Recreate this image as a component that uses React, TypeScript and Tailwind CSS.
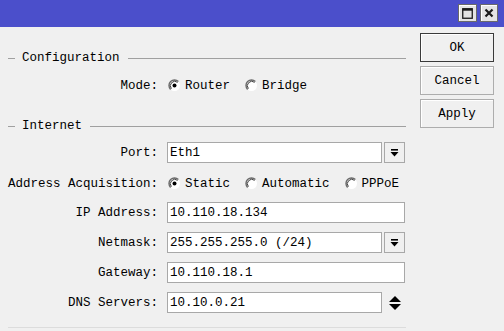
import React from "react";

const Radio = ({ checked }: { checked?: boolean }) => (
  <svg width="13" height="13" viewBox="0 0 13 13" className="shrink-0">
    <circle cx="6.5" cy="6.5" r="5.5" fill="#ffffff" />
    <path d="M2.61 10.39 A5.5 5.5 0 0 1 10.39 2.61" fill="none" stroke="#6a6a6a" strokeWidth="1.4" />
    <path d="M3.4 9.6 A4.4 4.4 0 0 1 9.6 3.4" fill="none" stroke="#2a2a2a" strokeWidth="0.9" />
    {checked && <circle cx="6.5" cy="6.5" r="2" fill="#000000" />}
  </svg>
);

const RadioOpt = ({ label, checked }: { label: string; checked?: boolean }) => (
  <div className="flex items-center gap-[4px]">
    <Radio checked={checked} />
    <span>{label}</span>
  </div>
);

const Label = ({ children }: { children: React.ReactNode }) => (
  <div className="w-[150px] shrink-0 text-right whitespace-pre mr-[9px]">{children}</div>
);

const Input = ({ value, wide }: { value: string; wide?: boolean }) => (
  <div
    className={`${wide ? "w-[238px]" : "w-[215px]"} h-[21px] bg-white border border-[#a8a8a8] flex items-center pl-[2px] whitespace-pre`}
  >
    {value}
  </div>
);

const DropBtn = () => (
  <div className="ml-[2px] w-[21px] h-[21px] border border-[#a8a8a8] bg-[#f0f0f0] flex items-center justify-center">
    <svg width="9" height="10" viewBox="0 0 9 10">
      <rect x="1" y="1" width="7" height="1.6" fill="#000" />
      <path d="M0.5 4 L8.5 4 L4.5 8.5 Z" fill="#000" />
    </svg>
  </div>
);

const Spinner = () => (
  <div className="ml-[6px] w-[14px] h-[21px] flex items-center justify-center">
    <svg width="14" height="16" viewBox="0 0 14 16">
      <path d="M1 7 L13 7 L7 1 Z" fill="#000" />
      <path d="M1 9 L13 9 L7 15 Z" fill="#000" />
    </svg>
  </div>
);

const GroupHeader = ({ title, className }: { title: string; className: string }) => (
  <div className={`flex items-center h-[20px] ${className}`}>
    <div className="w-[7px] h-px bg-[#a0a0a0]" />
    <span className="ml-[7px]">{title}</span>
    <div className="flex-1 ml-[8px] h-px bg-[#a0a0a0]" />
  </div>
);

const Row = ({ className, children }: { className: string; children: React.ReactNode }) => (
  <div className={`flex items-center h-[21px] ${className}`}>{children}</div>
);

const DlgBtn = ({ label, primary }: { label: string; primary?: boolean }) => (
  <div
    className={`h-[29px] w-[74px] flex items-center justify-center bg-[#f0f0f0] border ${
      primary ? "border-[#3a3a3a]" : "border-[#adadad]"
    } shadow-[inset_1px_1px_0_#ffffff]`}
  >
    {label}
  </div>
);

export default function App() {
  return (
    <div
      className="w-[504px] h-[331px] bg-[#f0f0f0] text-black overflow-hidden"
      style={{ fontFamily: '"Liberation Mono", monospace', fontSize: "12.5px", lineHeight: "14px" }}
    >
      <div className="h-[27px] bg-[#4b4fcb] flex justify-end items-start pt-[4px] pr-[6px] gap-[3px]">
        <div className="w-[19px] h-[18px] bg-[#e4e4e4] border border-[#6a6a6a] shadow-[inset_1px_1px_0_#ffffff] flex items-center justify-center">
          <svg width="11" height="11" viewBox="0 0 11 11">
            <rect x="0.75" y="0.75" width="9.5" height="9.5" fill="none" stroke="#1a1a1a" strokeWidth="1.3" />
            <rect x="0.5" y="0.5" width="10" height="2.2" fill="#1a1a1a" />
          </svg>
        </div>
        <div className="w-[18px] h-[18px] bg-[#e4e4e4] border border-[#6a6a6a] shadow-[inset_1px_1px_0_#ffffff] flex items-center justify-center">
          <svg width="10" height="10" viewBox="0 0 10 10">
            <path d="M1.5 1.5 L8.5 8.5 M8.5 1.5 L1.5 8.5" stroke="#1a1a1a" strokeWidth="2.2" />
          </svg>
        </div>
      </div>
      <div className="flex pl-[8px]">
        <div className="w-[398px] flex flex-col">
          <GroupHeader title="Configuration" className="mt-[21px]" />
          <Row className="mt-[7px]">
            <Label>Mode:</Label>
            <div className="flex items-center gap-[15px] ml-px">
              <RadioOpt label="Router" checked />
              <RadioOpt label="Bridge" />
            </div>
          </Row>
          <GroupHeader title="Internet" className="mt-[20px]" />
          <Row className="mt-[6px]">
            <Label>Port:</Label>
            <Input value="Eth1" />
            <DropBtn />
          </Row>
          <Row className="mt-[10px]">
            <Label>Address Acquisition:</Label>
            <div className="flex items-center gap-[15px] ml-px">
              <RadioOpt label="Static" checked />
              <RadioOpt label="Automatic" />
              <RadioOpt label="PPPoE" />
            </div>
          </Row>
          <Row className="mt-[8px]">
            <Label>IP Address:</Label>
            <Input value="10.110.18.134" wide />
          </Row>
          <Row className="mt-[9px]">
            <Label>Netmask:</Label>
            <Input value="255.255.255.0 (/24)" />
            <DropBtn />
          </Row>
          <Row className="mt-[9px]">
            <Label>Gateway:</Label>
            <Input value="10.110.18.1" wide />
          </Row>
          <Row className="mt-[9px]">
            <Label>DNS Servers:</Label>
            <Input value="10.10.0.21" />
            <Spinner />
          </Row>
          <div className="mt-[14px] h-px bg-[#dcdcdc]" />
        </div>
        <div className="ml-[14px] pt-[6px] flex flex-col gap-[4px]">
          <DlgBtn label="OK" primary />
          <DlgBtn label="Cancel" />
          <DlgBtn label="Apply" />
        </div>
      </div>
    </div>
  );
}
